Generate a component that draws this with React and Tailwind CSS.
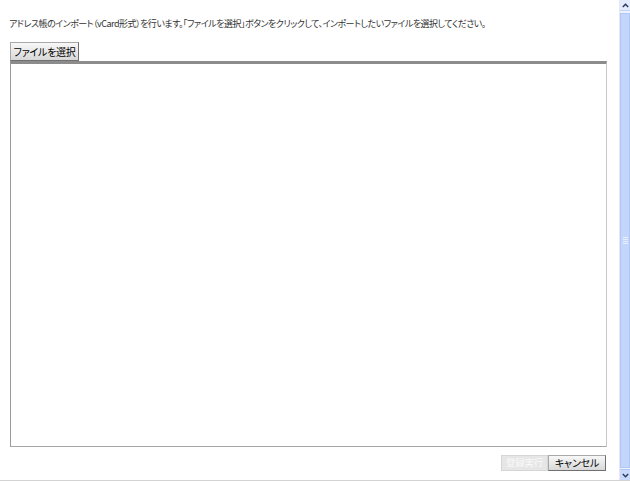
import React from "react";

const jp = { fontFamily: '"Noto Sans CJK JP", "Noto Sans", sans-serif' };

export default function App() {
  return (
    <div className="relative w-[630px] h-[482px] bg-white overflow-hidden flex">
      <div className="flex-1 flex flex-col pl-[10px] pr-[12px]">
        <div
          className="mt-[18px] h-[12px] leading-[12px] text-[9px] text-[#333] whitespace-nowrap -ml-[1px] [font-feature-settings:'palt'] tracking-[-0.5px]"
          style={jp}
        >
          アドレス帳のインポート（vCard形式）を行います。「ファイルを選択」ボタンをクリックして、インポートしたいファイルを選択してください。
        </div>
        <div className="mt-[12px] flex">
          <button
            className="h-[19px] w-[69px] p-0 whitespace-nowrap flex items-center justify-center text-[10px] tracking-[-0.3px] leading-none text-black border border-[#a8a8a8] border-r-[#707070] border-b-[#707070] bg-gradient-to-b from-[#f8f8f8] to-[#d8d8d8] [font-feature-settings:'palt']"
            style={jp}
          >
            ファイルを選択
          </button>
        </div>
        <div className="h-[386px] border-t-[3px] border-t-[#8c8c8c] border-l border-l-[#9a9a9a] border-r border-r-[#c8c8c8] border-b border-b-[#a6a6a6] bg-white" />
        <div className="mt-[8px] flex justify-end pr-[1px]">
          <button
            disabled
            className="h-[16px] w-[47px] p-0 whitespace-nowrap flex items-center justify-center text-[9.5px] tracking-[-0.3px] leading-none text-[#fafafa] border border-[#d6d6d6] bg-[#e6e6e6] [font-feature-settings:'palt']"
            style={jp}
          >
            登録実行
          </button>
          <button
            className="h-[16px] w-[58px] p-0 whitespace-nowrap flex items-center justify-center text-[10px] tracking-[-0.2px] leading-none text-black border border-[#a8a8a8] border-r-[#707070] border-b-[#707070] bg-gradient-to-b from-[#f8f8f8] to-[#d8d8d8] [font-feature-settings:'palt']"
            style={jp}
          >
            キャンセル
          </button>
        </div>
      </div>
      <div className="w-[11px] h-[480px] flex flex-col bg-[#eef2fc] border-l border-l-[#e4e8f4]">
        <div className="h-[11px] flex items-center justify-center bg-[#e2eafc] border-b border-[#c4d2f4]">
          <svg width="7" height="5" viewBox="0 0 7 5">
            <path d="M0.8 4 L3.5 1.3 L6.2 4" fill="none" stroke="#24375e" strokeWidth="1.4" />
          </svg>
        </div>
        <div className="flex-1 mt-[2px] mb-[1px] bg-[#c4d5fc] border border-[#b0c6f6] flex items-center justify-center">
          <div className="flex flex-col gap-[1px]">
            <div className="w-[5px] h-[1px] bg-[#e8efff]" />
            <div className="w-[5px] h-[1px] bg-[#e8efff]" />
            <div className="w-[5px] h-[1px] bg-[#e8efff]" />
            <div className="w-[5px] h-[1px] bg-[#e8efff]" />
          </div>
        </div>
        <div className="h-[11px] flex items-center justify-center bg-[#c9d8fb] border-t border-[#b0c6f6]">
          <svg width="7" height="5" viewBox="0 0 7 5">
            <path d="M0.8 1 L3.5 3.7 L6.2 1" fill="none" stroke="#24375e" strokeWidth="1.4" />
          </svg>
        </div>
      </div>
      <div className="absolute left-0 right-0 top-[480px] h-[1px] bg-[#d4d4d4]" />
    </div>
  );
}
